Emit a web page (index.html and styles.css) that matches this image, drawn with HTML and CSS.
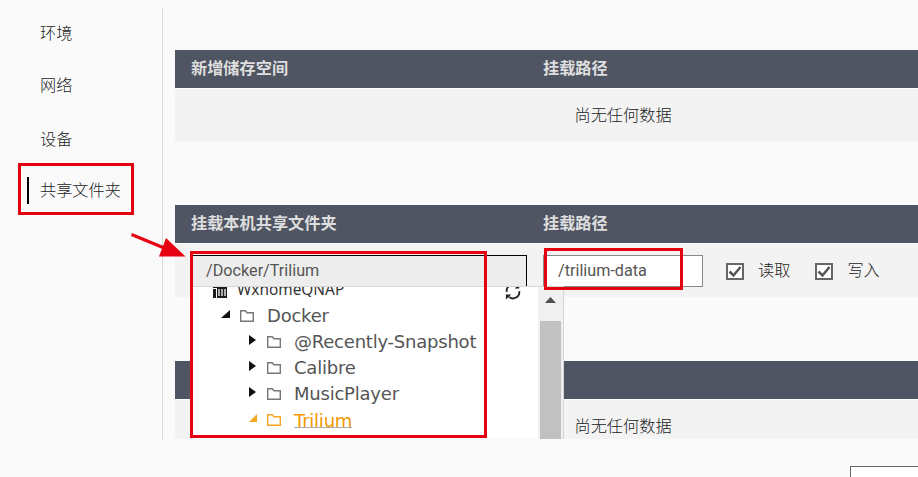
FILE: index.html
```html
<!DOCTYPE html>
<html lang="zh-CN">
<head>
<meta charset="utf-8">
<title>共享文件夹</title>
<link rel="stylesheet" href="styles.css">
</head>
<body>
<div class="dialog">
  <nav class="side">
    <a class="side-item">环境</a>
    <a class="side-item">网络</a>
    <a class="side-item third">设备</a>
    <a class="side-item active">共享文件夹</a>
  </nav>
  <main class="content">
    <section class="table">
      <div class="head"><span>新增储存空间</span><span>挂载路径</span></div>
      <div class="row empty">尚无任何数据</div>
    </section>
    <section class="table">
      <div class="head"><span>挂载本机共享文件夹</span><span>挂载路径</span></div>
      <div class="row fields">
        <div class="picker">
          <div class="select">/Docker/Trilium</div>
          <div class="popup">
            <div class="tree">
              <div class="root">
                <svg width="14" height="11" viewBox="0 0 14 11"><path d="M0 2h3v9H0zM0 0h14v1H0zM4 0h10v11H4z" fill="#1c1c1c"/><path d="M6 2v7M9 2v7M12 2v7" stroke="#fff" stroke-width="1.300"/></svg>
                <span>WxhomeQNAP</span>
              </div>
              <div class="node docker"><svg class="tri" viewBox="0 0 10 10"><path d="M9 1v8H0z"/></svg><svg class="folder" viewBox="0 0 14 12"><path d="M.7 11.300V.7h4.600l1.700 2h6.300v8.600z"/></svg><span>Docker</span></div>
              <div class="node sub snap"><svg class="tri" viewBox="0 0 10 10"><path d="M1 0l7 5-7 5z"/></svg><svg class="folder" viewBox="0 0 14 12"><path d="M.7 11.300V.7h4.600l1.700 2h6.300v8.600z"/></svg><span>@Recently-Snapshot</span></div>
              <div class="node sub"><svg class="tri" viewBox="0 0 10 10"><path d="M1 0l7 5-7 5z"/></svg><svg class="folder" viewBox="0 0 14 12"><path d="M.7 11.300V.7h4.600l1.700 2h6.300v8.600z"/></svg><span>Calibre</span></div>
              <div class="node sub"><svg class="tri" viewBox="0 0 10 10"><path d="M1 0l7 5-7 5z"/></svg><svg class="folder" viewBox="0 0 14 12"><path d="M.7 11.300V.7h4.600l1.700 2h6.300v8.600z"/></svg><span>MusicPlayer</span></div>
              <div class="node sub chosen"><svg class="tri" viewBox="0 0 10 10"><path d="M9 1v8H1z"/></svg><svg class="folder" viewBox="0 0 14 12"><path d="M.7 11.300V.7h4.600l1.700 2h6.300v8.600z"/></svg><span>Trilium</span></div>
            </div>
            <svg class="refresh" width="16" height="17" viewBox="0 0 18 18"><path d="M2 9.500A7 7 0 0 1 13.500 3M16 8.500A7 7 0 0 1 4.500 15" fill="none" stroke="#222" stroke-width="2"/><path d="M11 5.500h5V0zM7 12.500H1V18z" fill="#222"/></svg>
            <div class="scroll"><svg width="11" height="6" viewBox="0 0 11 6"><path d="M5.500 0L11 6H0z" fill="#505050"/></svg><i class="thumb"></i></div>
          </div>
        </div>
        <div class="path">/trilium-data</div>
        <label class="check"><svg viewBox="0 0 18 17"><rect x="1" y="1" width="16" height="15"/><path d="M3.500 8.500l4 4 7-8.500"/></svg><span>读取</span></label>
        <label class="check"><svg viewBox="0 0 18 17"><rect x="1" y="1" width="16" height="15"/><path d="M3.500 8.500l4 4 7-8.500"/></svg><span>写入</span></label>
      </div>
    </section>
    <section class="table">
      <div class="head"></div>
      <div class="row empty">尚无任何数据</div>
    </section>
  </main>
</div>
<div class="footer"><div class="button"></div></div>
<div class="mark mark-side"></div>
<div class="mark mark-tree"></div>
<div class="mark mark-path"></div>
<svg class="arrow" width="56" height="28" viewBox="0 0 56 28"><path d="M.5 2.500L32 15.500" stroke="#e60012" stroke-width="3"/><path d="M35 6l19.500 18.500H28z" fill="#e60012"/></svg>
</body>
</html>
```
FILE: styles.css
```css
* { box-sizing: border-box; }
body {
  margin: 0;
  width: 918px;
  height: 477px;
  overflow: hidden;
  background: #fafafa;
  color: #222;
  font: 300 16.2px/24px Roboto, "Noto Sans CJK SC", sans-serif;
}
svg { display: block; flex: none; }
.dialog { display: flex; height: 439px; padding-top: 7px; overflow: hidden; }
.side {
  flex: none;
  width: 163px;
  padding: 15px 0 0 27px;
  border-right: 1px solid #d8d8d8;
}
.side-item { display: block; height: 24px; padding-left: 13px; margin-bottom: 28px; }
.side-item.third { margin: 30px 0 25px; }
.side-item.active { height: 27px; line-height: 28px; padding-left: 11px; border-left: 2px solid #000; margin-top: 24px; }
.content { flex: 1; padding: 43px 0 0 12px; }
.table { height: 92px; margin-bottom: 63px; }
.table:nth-child(2) { margin-bottom: 64px; }
.head {
  display: grid;
  grid-template-columns: 352px 1fr;
  height: 38px;
  padding-left: 16px;
  line-height: 37px;
  background: #4f5562;
  color: #dedede;
  font-weight: 700;
}
.row { height: 54px; border-top: 1px solid #fff; background: #f3f3f3; }
.empty { padding-left: 399.5px; line-height: 53px; }
.fields { display: flex; align-items: flex-start; padding: 11px 0 0 16px; }
.picker { position: relative; width: 336px; margin-right: 16px; color: #555; font-weight: 400; }
.select { height: 33px; padding-left: 14px; line-height: 30px; border: 1px solid #000; background: #ededed; }
.popup {
  position: absolute;
  z-index: 2;
  top: 31px;
  left: 0;
  display: flex;
  width: 373px;
  height: 200px;
  overflow: hidden;
  background: #fff;
  border: 1px solid #d5d5d5;
}
.tree { flex: 1; }
.root { display: flex; height: 11px; padding-left: 21px; }
.root span { height: 10px; margin-left: 10px; overflow: hidden; font: 15.4px/5px "Noto Sans", sans-serif; color: #333; }
.node {
  display: flex;
  align-items: center;
  height: 26px;
  padding-left: 29px;
  font: 18px/26px "DejaVu Sans", sans-serif;
  letter-spacing: -0.22px;
  color: #555;
}
.docker { margin-top: 5px; }
.sub { padding-left: 56px; }
.tri { width: 10px; height: 10px; margin: -4px 9px 0 0; fill: #111; }
.folder { width: 14px; height: 12px; margin-right: 13px; fill: none; stroke: #777; stroke-width: 1.4; }
.chosen { color: #f39800; }
.chosen .tri { fill: #f5a623; }
.chosen .folder { stroke: #f5a623; }
.chosen span { height: 20px; margin-top: -4px; line-height: 25px; border-bottom: 1px solid #aaa; }
.refresh { margin: -4px 17px 0 0; }
.scroll { width: 25px; padding-left: 2px; background: #f0f0f0; }
.scroll svg { margin: 10px 0 18px 5px; }
.thumb { display: block; width: 21px; height: 170px; background: #c1c1c1; }
.path {
  width: 160px;
  height: 32px;
  padding-left: 14px;
  line-height: 30px;
  border: 1px solid #888;
  background: #fff;
  color: #555;
  font-weight: 400;
}
.check { display: flex; align-items: center; height: 32px; margin-left: 23px; }
.check svg { width: 18px; height: 17px; margin-right: 14px; fill: #fff; stroke: #666; stroke-width: 2; }
.check + .check { margin-left: 25px; }
.check path { fill: none; stroke: #555; stroke-width: 2.500; }
.footer { display: flex; justify-content: flex-end; padding-top: 27px; }
.button { width: 69px; height: 32px; margin-right: -1px; background: #fff; border: 1px solid #666; }
.mark { position: absolute; z-index: 3; border: 3px solid #e60012; }
.mark-side { left: 18px; top: 163px; width: 116px; height: 52px; }
.mark-tree { left: 190px; top: 251px; width: 297px; height: 187px; }
.mark-path { left: 544px; top: 248px; width: 139px; height: 42px; }
.arrow { position: absolute; z-index: 3; left: 131px; top: 232px; }
```
